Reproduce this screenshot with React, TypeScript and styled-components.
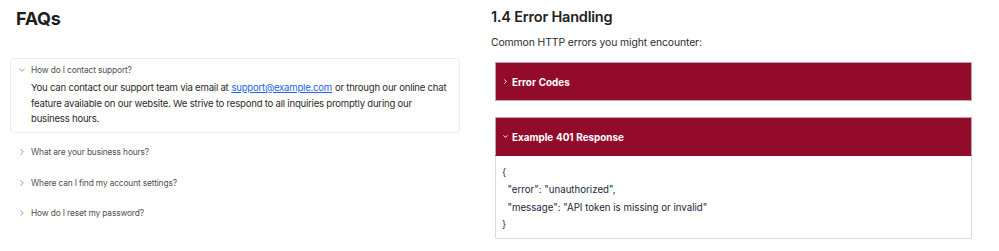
import React, { useState } from 'react';
import styled, { createGlobalStyle } from 'styled-components';
import { ChevronDown, ChevronRight } from 'lucide-react';

const GlobalStyle = createGlobalStyle`
  html, body {
    margin: 0;
    padding: 0;
    background: #fff;
  }
  body {
    font-family: Inter, "Noto Sans", "Liberation Sans", sans-serif;
    -webkit-font-smoothing: antialiased;
  }
`;

const Page = styled.div`
  display: flex;
  align-items: flex-start;
  width: 999px;
  height: 251px;
  overflow: hidden;
`;

const LeftColumn = styled.section`
  width: 450px;
  margin-left: 10px;
  padding-top: 7px;
`;

const RightColumn = styled.section`
  width: 481px;
  margin-left: 31px;
  padding-top: 6px;
`;

const FaqTitle = styled.h2`
  margin: 0 0 27px 6px;
  font-size: 18px;
  line-height: 24px;
  font-weight: 700;
  color: #1f1f1f;
  letter-spacing: -0.3px;
`;

const FaqCard = styled.div<{ $open: boolean }>`
  border: 1px solid ${p => (p.$open ? '#ececec' : 'transparent')};
  border-radius: 4px;
  margin-bottom: ${p => (p.$open ? '4px' : '0')};
`;

const Question = styled.button<{ $open: boolean }>`
  display: flex;
  align-items: center;
  gap: 4px;
  width: 100%;
  height: ${p => (p.$open ? '21px' : '28.5px')};
  padding: 0 0 0 6px;
  border: 0;
  background: none;
  font-family: inherit;
  font-size: 8.4px;
  letter-spacing: -0.15px;
  color: #505050;
  cursor: pointer;
  text-align: left;
  svg {
    color: #666;
    flex: none;
  }
`;

const Answer = styled.p`
  margin: 0;
  padding: 0 8px 5px 20px;
  font-size: 9.6px;
  letter-spacing: -0.23px;
  line-height: 15.6px;
  color: #2b2b2b;
  a {
    margin: 0 0.4px;
    color: #2563eb;
    text-decoration: underline;
  }
`;

const SectionTitle = styled.h3`
  margin: 0 0 5px 0;
  font-size: 14.5px;
  line-height: 22px;
  font-weight: 600;
  color: #222;
  letter-spacing: -0.2px;
`;

const Intro = styled.p`
  margin: 0 0 10px 0;
  font-size: 10.4px;
  letter-spacing: -0.1px;
  line-height: 19px;
  color: #2e2e2e;
`;

const Panel = styled.div`
  margin-left: 4px;
  width: 477px;
  margin-bottom: 16px;
`;

const PanelHeader = styled.button<{ $open: boolean }>`
  display: flex;
  align-items: center;
  gap: 3px;
  width: 100%;
  height: 39px;
  padding: 0 0 0 6px;
  border: 1px solid #c7a3ad;
  border-bottom-color: ${p => (p.$open ? '#930b2b' : '#c7a3ad')};
  background: #930b2b;
  color: #fff;
  font-family: inherit;
  font-size: 9.9px;
  font-weight: 700;
  word-spacing: 0.4px;
  text-align: left;
  cursor: pointer;
  svg {
    flex: none;
  }
`;

const CodeBody = styled.pre`
  margin: 0;
  height: 83px;
  box-sizing: border-box;
  padding: 8px 6px 0 6px;
  border: 1px solid #d6d9e0;
  border-top: 0;
  border-radius: 0 0 2px 2px;
  font-family: Inter, "Noto Sans", "Liberation Sans", sans-serif;
  font-size: 9.7px;
  line-height: 17.3px;
  color: #1d2640;
  white-space: pre;
`;

const faqs = [
  {
    q: 'How do I contact support?',
    a: (
      <>
        You can contact our support team via email at{' '}
        <a href="#">support@example.com</a> or through our online chat feature
        available on our website. We strive to respond to all inquiries promptly
        during our business hours.
      </>
    ),
  },
  { q: 'What are your business hours?', a: 'Our team is available Monday to Friday, 9am to 6pm.' },
  { q: 'Where can I find my account settings?', a: 'Open the menu and select Settings.' },
  { q: 'How do I reset my password?', a: 'Use the Forgot password link on the sign-in page.' },
];

const code = `{
  "error": "unauthorized",
  "message": "API token is missing or invalid"
}`;

export default function App() {
  const [openFaq, setOpenFaq] = useState(0);
  const [errorsOpen, setErrorsOpen] = useState(false);
  const [exampleOpen, setExampleOpen] = useState(true);

  return (
    <>
      <GlobalStyle />
      <Page>
        <LeftColumn>
          <FaqTitle>FAQs</FaqTitle>
          {faqs.map((f, i) => {
            const open = openFaq === i;
            return (
              <FaqCard key={f.q} $open={open}>
                <Question $open={open} onClick={() => setOpenFaq(open ? -1 : i)}>
                  {open ? (
                    <ChevronDown size={10} strokeWidth={1.6} />
                  ) : (
                    <ChevronRight size={10} strokeWidth={1.6} />
                  )}
                  {f.q}
                </Question>
                {open && <Answer>{f.a}</Answer>}
              </FaqCard>
            );
          })}
        </LeftColumn>

        <RightColumn>
          <SectionTitle>1.4 Error Handling</SectionTitle>
          <Intro>Common HTTP errors you might encounter:</Intro>
          <Panel>
            <PanelHeader $open={errorsOpen} onClick={() => setErrorsOpen(!errorsOpen)}>
              {errorsOpen ? (
                <ChevronDown size={7} strokeWidth={3.2} />
              ) : (
                <ChevronRight size={7} strokeWidth={3.2} />
              )}
              Error Codes
            </PanelHeader>
          </Panel>
          <Panel>
            <PanelHeader $open={exampleOpen} onClick={() => setExampleOpen(!exampleOpen)}>
              {exampleOpen ? (
                <ChevronDown size={7} strokeWidth={3.2} />
              ) : (
                <ChevronRight size={7} strokeWidth={3.2} />
              )}
              Example 401 Response
            </PanelHeader>
            {exampleOpen && <CodeBody>{code}</CodeBody>}
          </Panel>
        </RightColumn>
      </Page>
    </>
  );
}
